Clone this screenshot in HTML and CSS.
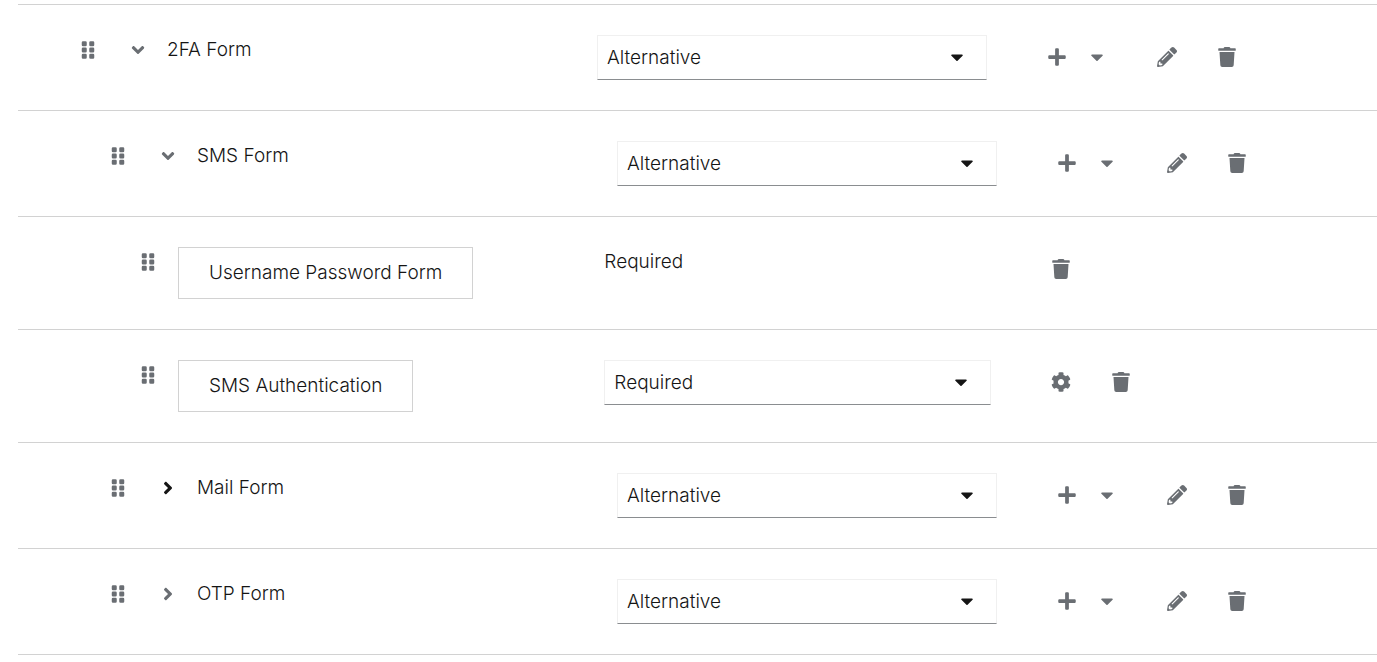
FILE: index.html
```html
<!DOCTYPE html>
<html lang="en">
<head>
<meta charset="utf-8">
<title>Authentication flow</title>
<link rel="stylesheet" href="styles.css">
</head>
<body>
<svg class="sprite" aria-hidden="true">
  <symbol id="grip" viewBox="0 0 320 512"><path d="M32 32h64a32 32 0 0 1 32 32v64a32 32 0 0 1-32 32H32a32 32 0 0 1-32-32V64a32 32 0 0 1 32-32zM32 192h64a32 32 0 0 1 32 32v64a32 32 0 0 1-32 32H32a32 32 0 0 1-32-32v-64a32 32 0 0 1 32-32zM32 352h64a32 32 0 0 1 32 32v64a32 32 0 0 1-32 32H32a32 32 0 0 1-32-32v-64a32 32 0 0 1 32-32zM224 32h64a32 32 0 0 1 32 32v64a32 32 0 0 1-32 32h-64a32 32 0 0 1-32-32V64a32 32 0 0 1 32-32zM224 192h64a32 32 0 0 1 32 32v64a32 32 0 0 1-32 32h-64a32 32 0 0 1-32-32v-64a32 32 0 0 1 32-32zM224 352h64a32 32 0 0 1 32 32v64a32 32 0 0 1-32 32h-64a32 32 0 0 1-32-32v-64a32 32 0 0 1 32-32z"/></symbol>
  <symbol id="angle" viewBox="0 0 256 512"><path d="M224.3 273l-136 136c-9.4 9.4-24.6 9.4-33.9 0l-22.6-22.6c-9.4-9.4-9.4-24.6 0-33.9l96.4-96.4-96.4-96.4c-9.4-9.4-9.4-24.6 0-33.9L54.3 103c9.4-9.4 24.6-9.4 33.9 0l136 136c9.5 9.4 9.5 24.6.1 34z"/></symbol>
  <symbol id="caret" viewBox="0 0 320 512"><path d="M31.3 192h257.3c17.8 0 26.7 21.5 14.1 34.1L174.1 354.8c-7.8 7.8-20.5 7.8-28.3 0L17.2 226.1C4.6 213.5 13.5 192 31.3 192z"/></symbol>
  <symbol id="plus" viewBox="0 0 448 512"><path d="M416 208H272V64c0-17.67-14.33-32-32-32h-32c-17.67 0-32 14.33-32 32v144H32c-17.67 0-32 14.33-32 32v32c0 17.67 14.33 32 32 32h144v144c0 17.67 14.33 32 32 32h32c17.67 0 32-14.33 32-32V304h144c17.67 0 32-14.33 32-32v-32c0-17.67-14.33-32-32-32z"/></symbol>
  <symbol id="pencil" viewBox="0 0 512 512"><path d="M497.9 142.1l-46.1 46.1c-4.7 4.7-12.3 4.7-17 0l-111-111c-4.7-4.7-4.7-12.3 0-17l46.1-46.1c18.7-18.7 49.1-18.7 67.9 0l60.1 60.1c18.8 18.7 18.8 49.1 0 67.9zM284.2 99.8L21.6 362.4.4 483.9c-2.9 16.4 11.4 30.6 27.8 27.8l121.5-21.3 262.6-262.6c4.7-4.7 4.7-12.3 0-17l-111-111c-4.8-4.7-12.4-4.7-17.1 0zM124.1 339.9c-5.5-5.5-5.5-14.3 0-19.8l154-154c5.5-5.5 14.3-5.5 19.8 0s5.5 14.3 0 19.8l-154 154c-5.5 5.5-14.3 5.5-19.8 0zM88 424h48v36.3l-64.5 11.3-31.1-31.1L51.7 376H88v48z"/></symbol>
  <symbol id="trash" viewBox="0 0 448 512"><path d="M432 32H312l-9.4-18.7A24 24 0 0 0 281.1 0H166.8a23.72 23.72 0 0 0-21.4 13.3L136 32H16A16 16 0 0 0 0 48v32a16 16 0 0 0 16 16h416a16 16 0 0 0 16-16V48a16 16 0 0 0-16-16zM53.2 467a48 48 0 0 0 47.9 45h245.8a48 48 0 0 0 47.9-45L416 128H32z"/></symbol>
  <symbol id="cog" viewBox="0 0 512 512"><path d="M487.4 315.7l-42.6-24.6c4.3-23.2 4.3-47 0-70.2l42.6-24.6c4.9-2.8 7.1-8.6 5.5-14-11.1-35.6-30-67.8-54.7-94.6-3.8-4.1-10-5.1-14.8-2.3L380.8 110c-17.9-15.4-38.5-27.3-60.8-35.1V25.8c0-5.6-3.9-10.5-9.4-11.7-36.7-8.2-74.3-7.8-109.2 0-5.5 1.2-9.4 6.1-9.4 11.7V75c-22.2 7.9-42.8 19.8-60.8 35.1L88.7 85.5c-4.9-2.8-11-1.9-14.8 2.3-24.7 26.7-43.6 58.9-54.7 94.6-1.7 5.4.6 11.2 5.5 14L67.3 221c-4.3 23.2-4.3 47 0 70.2l-42.6 24.6c-4.9 2.8-7.1 8.6-5.5 14 11.1 35.6 30 67.8 54.7 94.6 3.8 4.1 10 5.1 14.8 2.3l42.6-24.6c17.9 15.4 38.5 27.3 60.8 35.1v49.2c0 5.6 3.9 10.5 9.4 11.7 36.7 8.2 74.3 7.8 109.2 0 5.5-1.2 9.4-6.1 9.4-11.7v-49.2c22.2-7.9 42.8-19.8 60.8-35.1l42.6 24.6c4.9 2.8 11 1.9 14.8-2.3 24.7-26.7 43.6-58.9 54.7-94.6 1.5-5.5-.7-11.3-5.6-14.1zM256 336c-44.1 0-80-35.9-80-80s35.9-80 80-80 80 35.9 80 80-35.9 80-80 80z"/></symbol>
</svg>
<main class="flow">
  <ul class="list">
    <li class="row">
      <button class="grip" aria-label="Drag 2FA Form"><svg class="icon"><use href="#grip"/></svg></button>
      <button class="toggle open" aria-label="Collapse 2FA Form"><svg class="icon"><use href="#angle"/></svg></button>
      <div class="cells">
        <span class="name">2FA Form</span>
        <div class="picker"><select aria-label="2FA Form requirement"><option>Alternative</option><option>Required</option></select><svg class="icon"><use href="#caret"/></svg></div>
        <div class="actions">
          <button class="action" aria-label="Add"><svg class="icon"><use href="#plus"/></svg></button>
          <button class="more" aria-label="More"><svg class="icon"><use href="#caret"/></svg></button>
          <button class="action" aria-label="Edit"><svg class="icon"><use href="#pencil"/></svg></button>
          <button class="action" aria-label="Delete"><svg class="icon"><use href="#trash"/></svg></button>
        </div>
      </div>
    </li>
    <li class="row level-2">
      <button class="grip" aria-label="Drag SMS Form"><svg class="icon"><use href="#grip"/></svg></button>
      <button class="toggle open" aria-label="Collapse SMS Form"><svg class="icon"><use href="#angle"/></svg></button>
      <div class="cells">
        <span class="name">SMS Form</span>
        <div class="picker"><select aria-label="SMS Form requirement"><option>Alternative</option><option>Required</option></select><svg class="icon"><use href="#caret"/></svg></div>
        <div class="actions">
          <button class="action" aria-label="Add"><svg class="icon"><use href="#plus"/></svg></button>
          <button class="more" aria-label="More"><svg class="icon"><use href="#caret"/></svg></button>
          <button class="action" aria-label="Edit"><svg class="icon"><use href="#pencil"/></svg></button>
          <button class="action" aria-label="Delete"><svg class="icon"><use href="#trash"/></svg></button>
        </div>
      </div>
    </li>
    <li class="row level-3">
      <button class="grip" aria-label="Drag Username Password Form"><svg class="icon"><use href="#grip"/></svg></button>
      <div class="cells">
        <span class="step">Username Password Form</span>
        <span class="name">Required</span>
        <div class="actions">
          <button class="action" aria-label="Delete"><svg class="icon"><use href="#trash"/></svg></button>
        </div>
      </div>
    </li>
    <li class="row level-3">
      <button class="grip" aria-label="Drag SMS Authentication"><svg class="icon"><use href="#grip"/></svg></button>
      <div class="cells">
        <span class="step">SMS Authentication</span>
        <div class="picker"><select aria-label="SMS Authentication requirement"><option>Required</option><option>Disabled</option></select><svg class="icon"><use href="#caret"/></svg></div>
        <div class="actions">
          <button class="action" aria-label="Settings"><svg class="icon"><use href="#cog"/></svg></button>
          <button class="action" aria-label="Delete"><svg class="icon"><use href="#trash"/></svg></button>
        </div>
      </div>
    </li>
    <li class="row level-2">
      <button class="grip" aria-label="Drag Mail Form"><svg class="icon"><use href="#grip"/></svg></button>
      <button class="toggle active" aria-label="Expand Mail Form"><svg class="icon"><use href="#angle"/></svg></button>
      <div class="cells">
        <span class="name">Mail Form</span>
        <div class="picker"><select aria-label="Mail Form requirement"><option>Alternative</option><option>Required</option></select><svg class="icon"><use href="#caret"/></svg></div>
        <div class="actions">
          <button class="action" aria-label="Add"><svg class="icon"><use href="#plus"/></svg></button>
          <button class="more" aria-label="More"><svg class="icon"><use href="#caret"/></svg></button>
          <button class="action" aria-label="Edit"><svg class="icon"><use href="#pencil"/></svg></button>
          <button class="action" aria-label="Delete"><svg class="icon"><use href="#trash"/></svg></button>
        </div>
      </div>
    </li>
    <li class="row level-2">
      <button class="grip" aria-label="Drag OTP Form"><svg class="icon"><use href="#grip"/></svg></button>
      <button class="toggle" aria-label="Expand OTP Form"><svg class="icon"><use href="#angle"/></svg></button>
      <div class="cells">
        <span class="name">OTP Form</span>
        <div class="picker"><select aria-label="OTP Form requirement"><option>Alternative</option><option>Required</option></select><svg class="icon"><use href="#caret"/></svg></div>
        <div class="actions">
          <button class="action" aria-label="Add"><svg class="icon"><use href="#plus"/></svg></button>
          <button class="more" aria-label="More"><svg class="icon"><use href="#caret"/></svg></button>
          <button class="action" aria-label="Edit"><svg class="icon"><use href="#pencil"/></svg></button>
          <button class="action" aria-label="Delete"><svg class="icon"><use href="#trash"/></svg></button>
        </div>
      </div>
    </li>
  </ul>
</main>
</body>
</html>
```

FILE: styles.css
```css
* { box-sizing: border-box; }

body {
  margin: 0;
  background: #fff;
  color: #151515;
  font-family: Inter, "Open Sans", sans-serif;
  font-size: 19px;
  font-weight: 300;
  line-height: 30px;
}

.sprite { display: none; }

.flow {
  padding: 4px 0 0 18px;
  overflow: hidden;
}

/* The rows run on past the right edge of the panel. */
.list {
  margin: 0 -40px 0 0;
  padding: 0;
  list-style: none;
  border-top: 1px solid #d2d2d2;
}

.row {
  display: flex;
  align-items: flex-start;
  padding: 30px 0 30px 40px;
  border-bottom: 1px solid #d2d2d2;
}

.level-2 { padding-left: 70px; }
.level-3 { padding-left: 100px; }

button {
  display: flex;
  flex: none;
  align-items: center;
  justify-content: center;
  padding: 0;
  border: 0;
  background: none;
  color: #6a6e73;
  font: inherit;
}

.icon {
  display: block;
  width: 20px;
  height: 20px;
  fill: currentColor;
}

.grip {
  width: 60px;
  height: 30px;
}

.toggle {
  width: 40px;
  height: 30px;
  margin-right: 9px;
}

.open .icon { transform: rotate(90deg); }
.active { color: #151515; }

.cells {
  display: grid;
  flex: 1;
  grid-template-columns: repeat(3, minmax(0, 1fr));
  column-gap: 40px;
  align-items: start;
}

.step {
  justify-self: start;
  padding: 10px 30px;
  border: 1px solid #d2d2d2;
  white-space: nowrap;
}

.picker { position: relative; }

.picker select {
  display: block;
  width: 100%;
  height: 45px;
  padding: 0 50px 0 9px;
  appearance: none;
  border: 1px solid #f0f0f0;
  border-bottom-color: #8a8d90;
  border-radius: 0;
  background: #fff;
  color: inherit;
  font: inherit;
}

.picker .icon {
  position: absolute;
  top: 12px;
  right: 20px;
  pointer-events: none;
}

.actions { display: flex; }

.action {
  width: 60px;
  height: 44px;
}

.more {
  width: 20px;
  height: 44px;
  margin-right: 30px;
}
```
